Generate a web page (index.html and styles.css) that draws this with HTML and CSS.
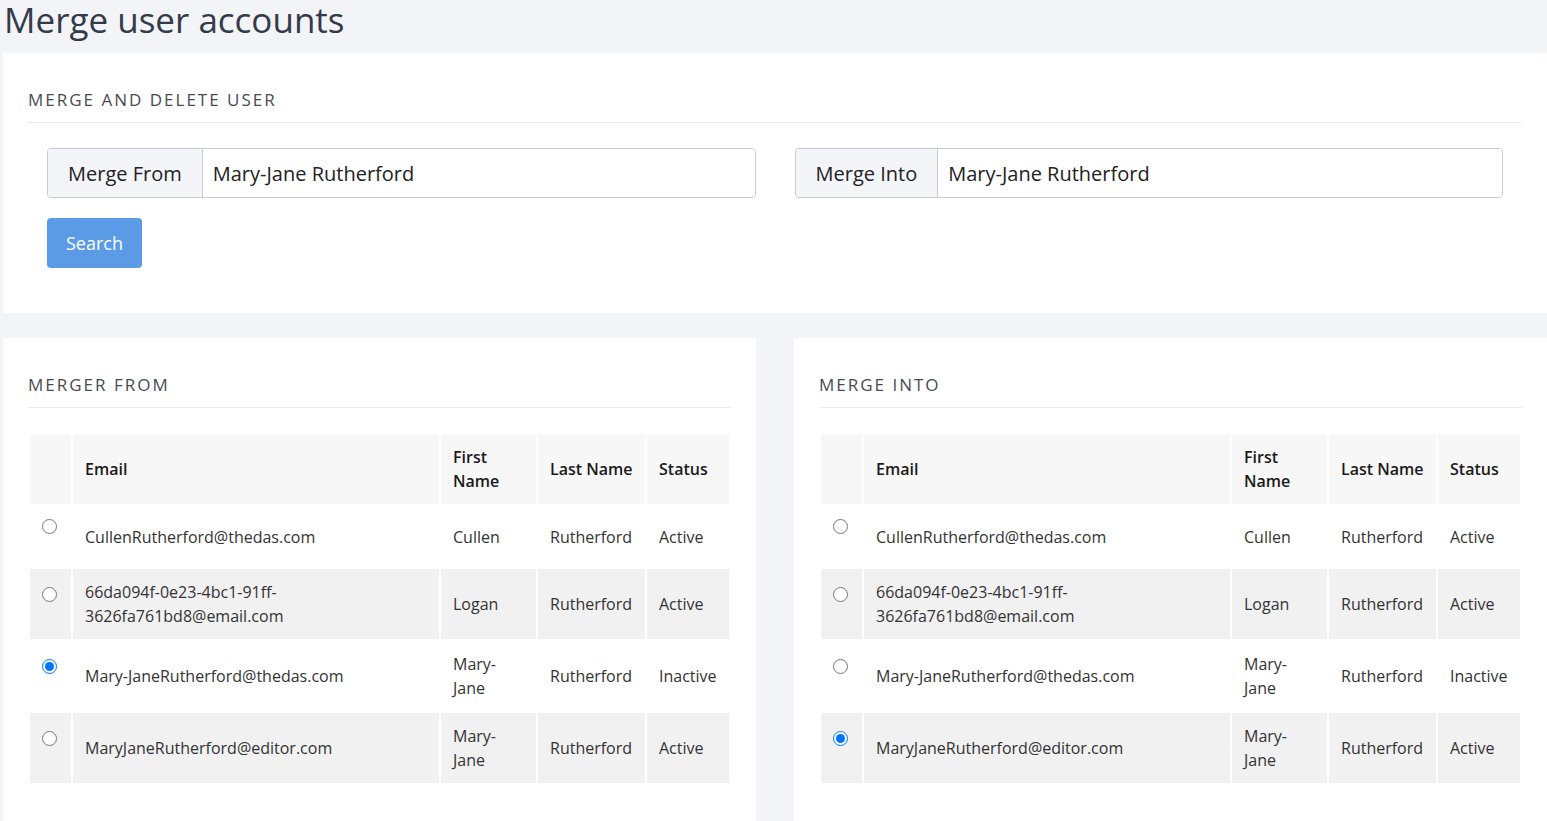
FILE: index.html
```html
<!doctype html>
<html lang="en">
<head>
    <meta charset="UTF-8">
    <title>Merge user accounts</title>
    <link rel="stylesheet" href="styles.css">
</head>
<body>
    <div class="page">
        <h1 class="page-title">Merge user accounts</h1>

        <div class="card">
            <h2 class="card-title">Merge and delete user</h2>
            <hr class="divider">
            <div class="search-form">
                <div class="input-row">
                    <div class="input-group">
                        <span class="addon">Merge From</span>
                        <input class="field" type="text" value="Mary-Jane Rutherford">
                    </div>
                    <div class="input-group">
                        <span class="addon">Merge Into</span>
                        <input class="field" type="text" value="Mary-Jane Rutherford">
                    </div>
                </div>
                <button class="btn-search" type="button">Search</button>
            </div>
        </div>

        <div class="results">
            <div class="card card-result">
                <h2 class="card-title">Merger From</h2>
                <hr class="divider">
                <table class="users">
                    <thead>
                        <tr>
                            <th class="col-sel"></th>
                            <th>Email</th>
                            <th class="col-first">First Name</th>
                            <th class="col-last">Last Name</th>
                            <th class="col-status">Status</th>
                        </tr>
                    </thead>
                    <tbody>
                        <tr>
                            <td class="col-sel"><input type="radio" name="from"></td>
                            <td>CullenRutherford@thedas.com</td>
                            <td>Cullen</td>
                            <td>Rutherford</td>
                            <td>Active</td>
                        </tr>
                        <tr>
                            <td class="col-sel"><input type="radio" name="from"></td>
                            <td>66da094f-0e23-4bc1-91ff-3626fa761bd8@email.com</td>
                            <td>Logan</td>
                            <td>Rutherford</td>
                            <td>Active</td>
                        </tr>
                        <tr>
                            <td class="col-sel"><input type="radio" name="from" checked></td>
                            <td>Mary-JaneRutherford@thedas.com</td>
                            <td>Mary-Jane</td>
                            <td>Rutherford</td>
                            <td>Inactive</td>
                        </tr>
                        <tr>
                            <td class="col-sel"><input type="radio" name="from"></td>
                            <td>MaryJaneRutherford@editor.com</td>
                            <td>Mary-Jane</td>
                            <td>Rutherford</td>
                            <td>Active</td>
                        </tr>
                    </tbody>
                </table>
            </div>

            <div class="card card-result">
                <h2 class="card-title">Merge Into</h2>
                <hr class="divider">
                <table class="users">
                    <thead>
                        <tr>
                            <th class="col-sel"></th>
                            <th>Email</th>
                            <th class="col-first">First Name</th>
                            <th class="col-last">Last Name</th>
                            <th class="col-status">Status</th>
                        </tr>
                    </thead>
                    <tbody>
                        <tr>
                            <td class="col-sel"><input type="radio" name="into"></td>
                            <td>CullenRutherford@thedas.com</td>
                            <td>Cullen</td>
                            <td>Rutherford</td>
                            <td>Active</td>
                        </tr>
                        <tr>
                            <td class="col-sel"><input type="radio" name="into"></td>
                            <td>66da094f-0e23-4bc1-91ff-3626fa761bd8@email.com</td>
                            <td>Logan</td>
                            <td>Rutherford</td>
                            <td>Active</td>
                        </tr>
                        <tr>
                            <td class="col-sel"><input type="radio" name="into"></td>
                            <td>Mary-JaneRutherford@thedas.com</td>
                            <td>Mary-Jane</td>
                            <td>Rutherford</td>
                            <td>Inactive</td>
                        </tr>
                        <tr>
                            <td class="col-sel"><input type="radio" name="into" checked></td>
                            <td>MaryJaneRutherford@editor.com</td>
                            <td>Mary-Jane</td>
                            <td>Rutherford</td>
                            <td>Active</td>
                        </tr>
                    </tbody>
                </table>
            </div>
        </div>
    </div>
</body>
</html>
```

FILE: styles.css
```css
body{
    margin: 0;
    background-color: #f3f4f8;
    font-family: "Open Sans", "Noto Sans", sans-serif;
    color: #333;
}
.page{
    padding-left: 3px;
}
.page-title{
    margin: 0;
    padding-left: 1px;
    height: 53px;
    font-size: 35px;
    font-weight: 400;
    line-height: 40px;
    color: #333b4a;
}
.card{
    background-color: #fff;
    padding: 35px 25px 45px;
}
.card-title{
    margin: 0;
    font-size: 17px;
    font-weight: 400;
    line-height: 24px;
    letter-spacing: 2px;
    text-transform: uppercase;
    color: #484c52;
}
.divider{
    margin: 10px 0 0;
    border: 0;
    border-top: 1px solid #ececec;
}
.search-form{
    padding: 25px 19px 0;
}
.input-row{
    display: grid;
    grid-template-columns: 1fr 1fr;
    column-gap: 39px;
}
.input-group{
    display: flex;
    height: 50px;
    box-sizing: border-box;
    border: 1px solid #c8cad0;
    border-radius: 4px;
    overflow: hidden;
}
.addon{
    display: flex;
    align-items: center;
    padding: 0 20px;
    background-color: #f4f5f9;
    border-right: 1px solid #c8cad0;
    font-size: 20px;
    color: #222;
}
.field{
    flex: 1;
    min-width: 0;
    border: 0;
    padding: 0 10px;
    font-family: inherit;
    font-size: 20px;
    color: #222;
    outline: none;
}
.btn-search{
    margin-top: 20px;
    height: 50px;
    padding: 0 19px;
    border: 0;
    border-radius: 4px;
    background-color: #5b9be6;
    color: #fff;
    font-family: inherit;
    font-size: 18px;
    cursor: pointer;
}
.results{
    display: grid;
    grid-template-columns: 1fr 1fr;
    column-gap: 38px;
    margin-top: 25px;
}
.card-result{
    padding-bottom: 60px;
}
.users{
    width: 100%;
    margin-top: 24px;
    table-layout: fixed;
    border-collapse: separate;
    border-spacing: 2px;
    font-size: 16px;
    line-height: 24px;
}
.users th,.users td{
    box-sizing: border-box;
    padding: 11px 12px;
    text-align: left;
    vertical-align: middle;
}
.users th{
    background-color: #f7f7f7;
    font-weight: 600;
    color: #1a1a1a;
}
.users td{
    color: #333;
}
.users tbody tr:nth-child(even) td{
    background-color: #f1f1f1;
}
.users .col-sel{
    width: 41px;
}
.users .col-first{
    width: 95px;
}
.users .col-last{
    width: 107px;
}
.users .col-status{
    width: 82px;
}
.col-sel input{
    display: block;
    width: 15px;
    height: 15px;
    margin: 2px 0 22px;
}
```
